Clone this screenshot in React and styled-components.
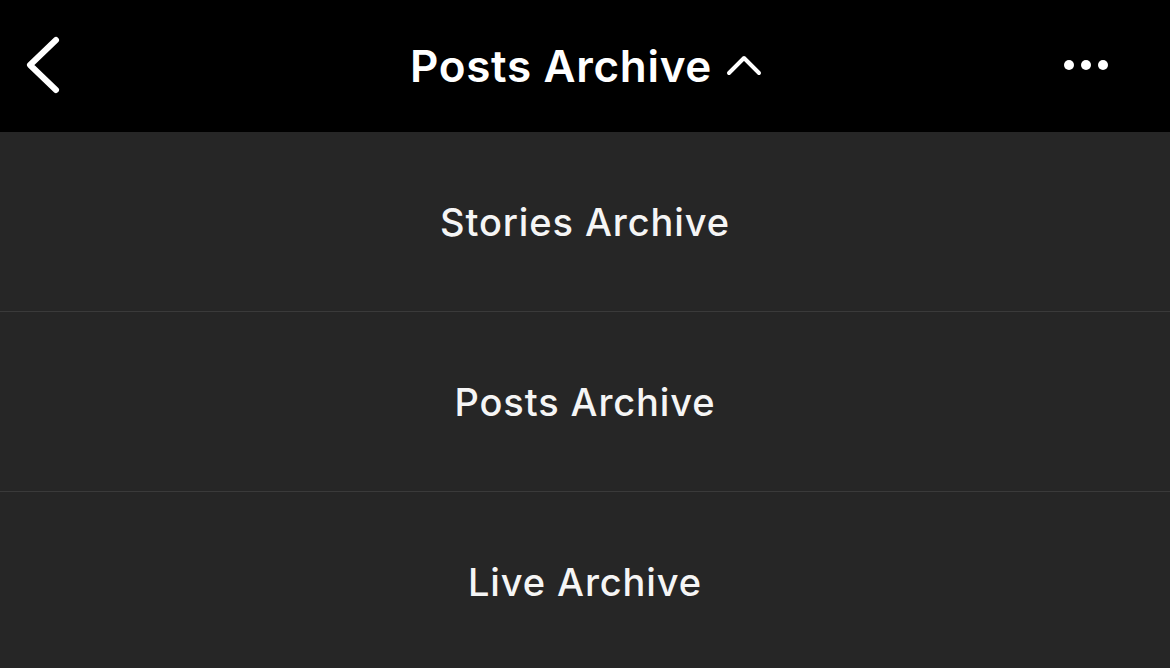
import styled, { createGlobalStyle } from "styled-components";

const Global = createGlobalStyle`
  html, body { margin: 0; padding: 0; background: #262626; }
  body { font-family: Inter, "Noto Sans", sans-serif; -webkit-font-smoothing: antialiased; }
`;

export default function App() {
  const items = ["Stories Archive", "Posts Archive", "Live Archive"];
  return (
    <Page>
      <Global />
      <Header>
        <Side>
          <svg width="40" height="60" viewBox="0 0 40 60" fill="none">
            <path d="M31 5 L5 30 L31 55" stroke="#fff" strokeWidth="6" strokeLinecap="round" strokeLinejoin="round" />
          </svg>
        </Side>
        <Title>
          Posts Archive
          <svg width="36" height="22" viewBox="0 0 36 22" fill="none">
            <path d="M3 19 L18 4 L33 19" stroke="#fff" strokeWidth="4" strokeLinecap="round" strokeLinejoin="round" />
          </svg>
        </Title>
        <Side $right>
          <Dots>
            <span /><span /><span />
          </Dots>
        </Side>
      </Header>
      <List>
        {items.map((label) => (
          <Row key={label}>{label}</Row>
        ))}
      </List>
    </Page>
  );
}

const Page = styled.div`
  width: 1170px;
  height: 668px;
  overflow: hidden;
  background: #262626;
`;

const Header = styled.div`
  height: 132px;
  background: #000;
  display: grid;
  grid-template-columns: 200px 1fr 200px;
  align-items: center;
  color: #fff;
`;

const Side = styled.div`
  display: flex;
  justify-content: ${(p) => (p.$right ? "flex-end" : "flex-start")};
  padding: ${(p) => (p.$right ? "0 62px 0 0" : "0 0 0 25px")};
  svg { display: block; margin-top: -2px; }
`;

const Title = styled.div`
  display: flex;
  align-items: center;
  justify-content: center;
  gap: 14px;
  font-size: 44px;
  font-weight: 600;
  letter-spacing: 0.7px;
  margin-left: 2px;
  svg { margin-top: -2px; }
`;

const Dots = styled.div`
  display: flex;
  gap: 7px;
  margin-top: -2px;
  span {
    width: 10px;
    height: 10px;
    border-radius: 50%;
    background: #fff;
  }
`;

const List = styled.div`
  display: flex;
  flex-direction: column;
`;

const Row = styled.div`
  height: 179px;
  border-bottom: 1px solid #3a3a3a;
  display: flex;
  align-items: center;
  justify-content: center;
  color: #f5f5f5;
  font-size: 38px;
  font-weight: 500;
  letter-spacing: 0.9px;
`;
